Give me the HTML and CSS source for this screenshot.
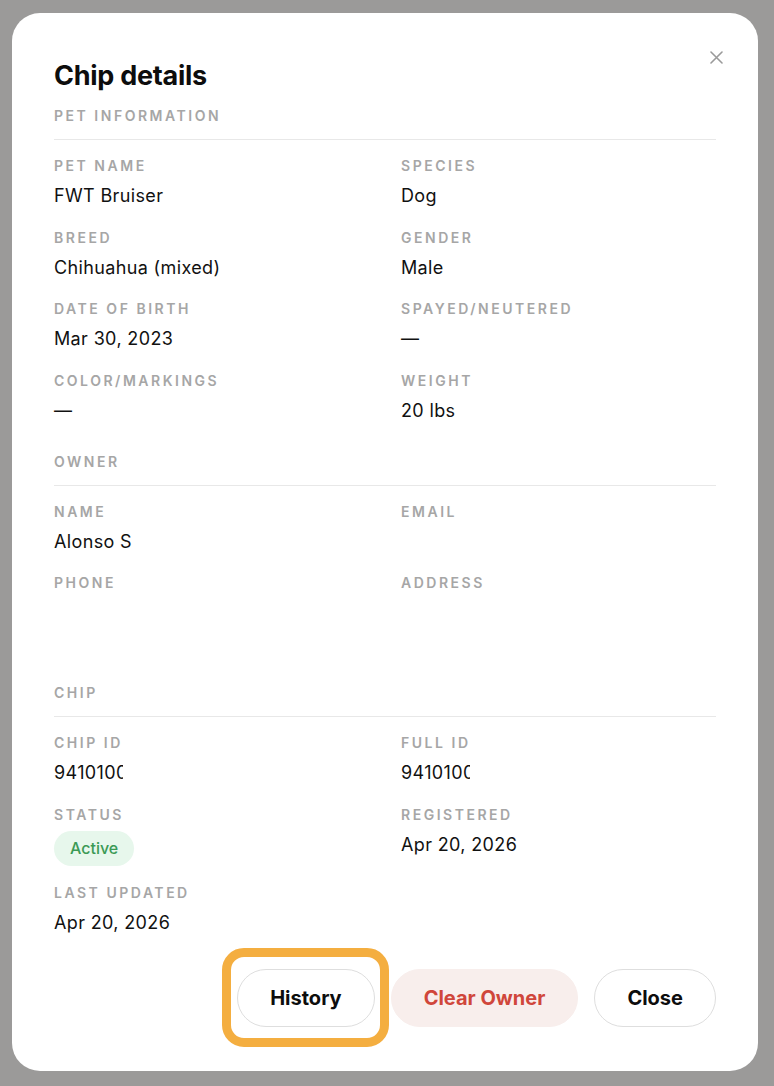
FILE: index.html
```html
<!DOCTYPE html>
<html lang="en">
<head>
<meta charset="utf-8">
<title>Chip details</title>
<link rel="stylesheet" href="styles.css">
</head>
<body>
<div class="backdrop">
  <div class="modal" role="dialog" aria-labelledby="title">
    <button class="close-x" aria-label="Close">
      <svg width="13" height="13" viewBox="0 0 13 13"><path d="M1 1L12 12M12 1L1 12" stroke="#9a9a9a" stroke-width="1.6" stroke-linecap="round"/></svg>
    </button>
    <h1 id="title" class="title">Chip details</h1>

    <section class="section">
      <h2 class="section-head">Pet information</h2>
      <dl class="grid">
        <div class="field"><dt class="label">Pet name</dt><dd class="value">FWT Bruiser</dd></div>
        <div class="field"><dt class="label">Species</dt><dd class="value">Dog</dd></div>
        <div class="field"><dt class="label">Breed</dt><dd class="value">Chihuahua (mixed)</dd></div>
        <div class="field"><dt class="label">Gender</dt><dd class="value">Male</dd></div>
        <div class="field"><dt class="label">Date of birth</dt><dd class="value">Mar 30, 2023</dd></div>
        <div class="field"><dt class="label">Spayed/Neutered</dt><dd class="value">—</dd></div>
        <div class="field"><dt class="label">Color/Markings</dt><dd class="value">—</dd></div>
        <div class="field"><dt class="label">Weight</dt><dd class="value">20 lbs</dd></div>
      </dl>
    </section>

    <section class="section">
      <h2 class="section-head">Owner</h2>
      <dl class="grid">
        <div class="field"><dt class="label">Name</dt><dd class="value">Alonso S</dd></div>
        <div class="field"><dt class="label">Email</dt><dd class="value"></dd></div>
        <div class="field"><dt class="label">Phone</dt><dd class="value blank"></dd></div>
        <div class="field"><dt class="label">Address</dt><dd class="value blank"></dd></div>
      </dl>
    </section>

    <section class="section">
      <h2 class="section-head">Chip</h2>
      <dl class="grid">
        <div class="field"><dt class="label">Chip ID</dt><dd class="value clip">941010000000000</dd></div>
        <div class="field"><dt class="label">Full ID</dt><dd class="value clip">941010000000000</dd></div>
        <div class="field"><dt class="label">Status</dt><dd class="value"><span class="badge">Active</span></dd></div>
        <div class="field"><dt class="label">Registered</dt><dd class="value">Apr 20, 2026</dd></div>
        <div class="field"><dt class="label">Last updated</dt><dd class="value">Apr 20, 2026</dd></div>
      </dl>
    </section>

    <div class="actions">
      <button class="btn btn-outline focused">History</button>
      <button class="btn btn-danger">Clear Owner</button>
      <button class="btn btn-outline">Close</button>
    </div>
  </div>
</div>
</body>
</html>
```

FILE: styles.css
```css
* { box-sizing: border-box; }
html, body {
  margin: 0;
  padding: 0;
  background: #9b9a99;
  font-family: Inter, "Noto Sans", sans-serif;
  color: #111;
}
.backdrop {
  padding: 13px 16px 15px 12px;
}
.modal {
  position: relative;
  background: #fff;
  border-radius: 28px;
  padding: 47px 42px 43px 42px;
  min-height: 1058px;
}
.close-x {
  position: absolute;
  top: 38px;
  right: 35px;
  width: 13px;
  height: 13px;
  padding: 0;
  border: 0;
  background: none;
  display: flex;
}
.title {
  margin: 0;
  font-size: 27px;
  line-height: 32px;
  font-weight: 700;
  letter-spacing: -0.01em;
  color: #0d0d0d;
}
.section { margin-top: 14px; }
.section + .section { margin-top: 27px; }
.section-head {
  margin: 0;
  font-size: 14px;
  line-height: 20px;
  font-weight: 600;
  letter-spacing: 0.18em;
  text-transform: uppercase;
  color: #a6a6a6;
  padding-bottom: 13px;
  border-bottom: 1px solid #e8e8e8;
}
.grid {
  margin: 16px 0 0 0;
  display: grid;
  grid-template-columns: 1fr 1fr;
  column-gap: 32px;
  row-gap: 17.5px;
}
.field { margin: 0; min-width: 0; }
.label {
  font-size: 14px;
  line-height: 20px;
  font-weight: 600;
  letter-spacing: 0.18em;
  text-transform: uppercase;
  color: #a6a6a6;
}
.value {
  margin: 6px 0 0 0;
  font-size: 18px;
  line-height: 28px;
  min-height: 28px;
  letter-spacing: 0.02em;
  color: #111;
}
.value.blank { min-height: 57px; }
.value.clip {
  width: 69px;
  overflow: hidden;
  white-space: nowrap;
}
.badge {
  display: inline-flex;
  align-items: center;
  height: 35px;
  padding: 0 16px;
  border-radius: 18px;
  background: #e7f7ec;
  color: #3b9a55;
  font-size: 16px;
  font-weight: 500;
  letter-spacing: 0;
  vertical-align: top;
}
.actions {
  margin-top: 32px;
  display: flex;
  justify-content: flex-end;
  gap: 16px;
}
.btn {
  position: relative;
  height: 58px;
  border-radius: 29px;
  padding: 0 32px;
  font-family: inherit;
  font-size: 20px;
  font-weight: 700;
  background: #fff;
  color: #0d0d0d;
  border: 1px solid #dedede;
}
.btn-danger {
  background: #f8eeec;
  border-color: #f8eeec;
  color: #d0463b;
}
.focused::after {
  content: "";
  position: absolute;
  left: -16px;
  right: -15px;
  top: -22px;
  bottom: -21px;
  border: 9px solid #f4ae40;
  border-radius: 22px;
  pointer-events: none;
}
```
